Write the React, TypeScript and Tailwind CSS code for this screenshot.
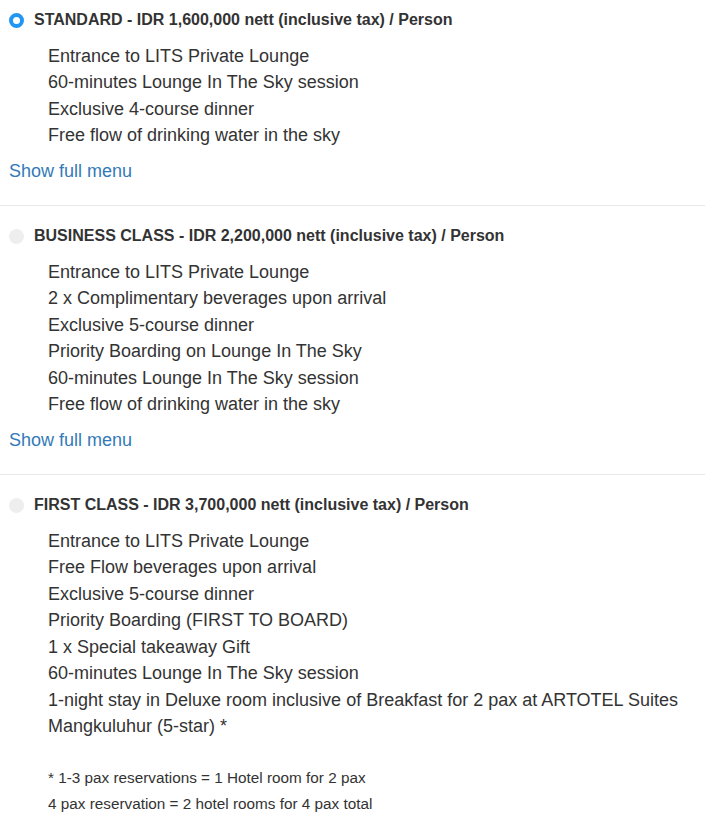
type Pkg = {
  title: string;
  items: string[];
  selected?: boolean;
  showMenu?: boolean;
  notes?: string[];
};

const packages: Pkg[] = [
  {
    title: "STANDARD - IDR 1,600,000 nett (inclusive tax) / Person",
    selected: true,
    showMenu: true,
    items: [
      "Entrance to LITS Private Lounge",
      "60-minutes Lounge In The Sky session",
      "Exclusive 4-course dinner",
      "Free flow of drinking water in the sky",
    ],
  },
  {
    title: "BUSINESS CLASS - IDR 2,200,000 nett (inclusive tax) / Person",
    showMenu: true,
    items: [
      "Entrance to LITS Private Lounge",
      "2 x Complimentary beverages upon arrival",
      "Exclusive 5-course dinner",
      "Priority Boarding on Lounge In The Sky",
      "60-minutes Lounge In The Sky session",
      "Free flow of drinking water in the sky",
    ],
  },
  {
    title: "FIRST CLASS - IDR 3,700,000 nett (inclusive tax) / Person",
    items: [
      "Entrance to LITS Private Lounge",
      "Free Flow beverages upon arrival",
      "Exclusive 5-course dinner",
      "Priority Boarding (FIRST TO BOARD)",
      "1 x Special takeaway Gift",
      "60-minutes Lounge In The Sky session",
      "1-night stay in Deluxe room inclusive of Breakfast for 2 pax at ARTOTEL Suites Mangkuluhur (5-star) *",
    ],
    notes: [
      "* 1-3 pax reservations = 1 Hotel room for 2 pax",
      "4 pax reservation = 2 hotel rooms for 4 pax total",
    ],
  },
];

function Radio({ checked }: { checked?: boolean }) {
  return checked ? (
    <span className="h-[15px] w-[15px] shrink-0 rounded-full border-[4px] border-[#2196f3] bg-white" />
  ) : (
    <span className="h-[15px] w-[15px] shrink-0 rounded-full bg-[#eeeeee]" />
  );
}

function Package({ pkg, last }: { pkg: Pkg; last: boolean }) {
  return (
    <div className={last ? "pl-[9px]" : "border-b border-[#e8e8e8] pb-[20px] pl-[9px]"}>
      <div className="flex h-[39px] items-center gap-[10px] pt-px">
        <Radio checked={pkg.selected} />
        <span className="text-[16px] font-bold text-[#333]">{pkg.title}</span>
      </div>
      <ul className="mt-[3.5px] pl-[39px] pr-2 text-[18px] leading-[26.5px] text-[#333]">
        {pkg.items.map((it, i) => (
          <li key={i}>{it}</li>
        ))}
      </ul>
      {pkg.showMenu && (
        <a href="#" className="mt-[9.5px] block text-[18px] leading-[26.5px] text-[#337ab7]">
          Show full menu
        </a>
      )}
      {pkg.notes && (
        <div className="mt-[25.5px] pl-[39px] text-[15.3px] leading-[26px] text-[#333]">
          {pkg.notes.map((n, i) => (
            <p key={i}>{n}</p>
          ))}
        </div>
      )}
    </div>
  );
}

export default function App() {
  return (
    <div
      className="min-h-screen bg-white"
      style={{ fontFamily: '"Liberation Sans", Arial, sans-serif' }}
    >
      <div className="flex flex-col gap-[10.5px]">
        {packages.map((p, i) => (
          <Package key={i} pkg={p} last={i === packages.length - 1} />
        ))}
      </div>
    </div>
  );
}
